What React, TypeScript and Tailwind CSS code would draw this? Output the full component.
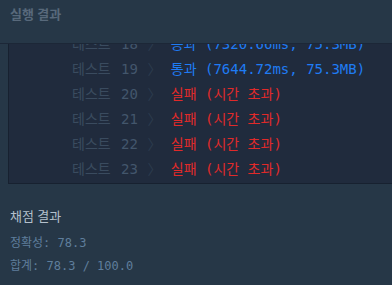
const rows = [
  { n: 18, ok: true, text: "통과 (7320.66ms, 75.3MB)" },
  { n: 19, ok: true, text: "통과 (7644.72ms, 75.3MB)" },
  { n: 20, ok: false, text: "실패 (시간 초과)" },
  { n: 21, ok: false, text: "실패 (시간 초과)" },
  { n: 22, ok: false, text: "실패 (시간 초과)" },
  { n: 23, ok: false, text: "실패 (시간 초과)" },
];

const mono = "font-['DejaVu_Sans_Mono','Noto_Sans_CJK_KR',monospace]";

export default function App() {
  return (
    <div className="w-[392px] h-[285px] overflow-hidden bg-[#263747] flex flex-col font-['Noto_Sans','Noto_Sans_CJK_KR',sans-serif]">
      {/* header */}
      <div className="h-[44px] shrink-0 border-b border-[#1c2737] px-[10px] pt-[4px]">
        <div className="text-[13px] leading-[20px] font-bold text-[#58697b]">실행 결과</div>
      </div>

      {/* output panel, scrolled */}
      <div className="ml-[8px] h-[140px] shrink-0 overflow-hidden border-l border-b border-[#172130] bg-[#202b3d]">
        <div className={`-mt-[12px] pl-[63px] text-[14px] whitespace-pre ${mono}`}>
          {rows.map((r) => (
            <div key={r.n} className="h-[25px] leading-[25px] flex">
              <span className="text-[#3a4b5f]">테스트</span>
              <span className="ml-[2px] text-[#43566c]"> {r.n} </span>
              <span className="ml-[1px] text-[#2c3b4e]">〉</span>
              <span> </span>
              <span className="ml-[1px] text-[#1f7cf4] data-[fail=true]:text-[#e02a2a]" data-fail={!r.ok}>
                {r.text}
              </span>
            </div>
          ))}
        </div>
      </div>

      {/* grading */}
      <div className="px-[10px] pt-[22px]">
        <div className="text-[13px] leading-[20px] text-[#b4c0cc]">채점 결과</div>
        <div className={`mt-[6px] text-[12px] leading-[23px] text-[#5f7e9c] whitespace-pre ${mono}`}>
          <div>정확성: 78.3</div>
          <div>합계: 78.3 / 100.0</div>
        </div>
      </div>
    </div>
  );
}
